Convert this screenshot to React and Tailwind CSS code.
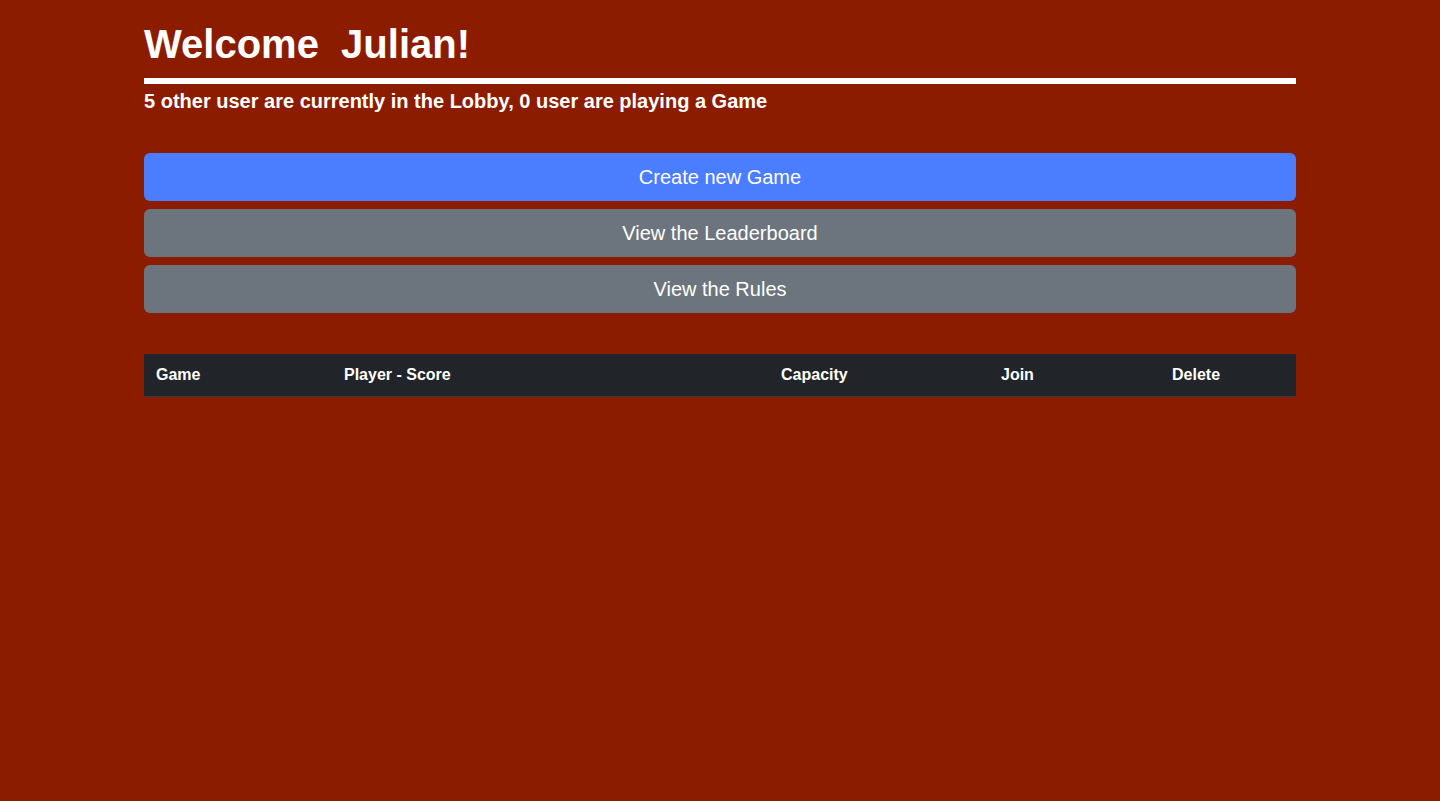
export default function App() {
  const buttons = [
    { label: "Create new Game", cls: "bg-[#4a7dff]" },
    { label: "View the Leaderboard", cls: "bg-[#6c757d]" },
    { label: "View the Rules", cls: "bg-[#6c757d]" },
  ];

  return (
    <div className="min-h-[801px] bg-[#8c1c00] font-['Liberation_Sans',Arial,sans-serif] text-white">
      <div className="w-[1152px] mx-auto pt-[20px]">
        {/* Header */}
        <h1 className="text-[40px] leading-[48px] font-bold whitespace-pre">Welcome  Julian!</h1>
        <div className="h-[6px] bg-white mt-[10px]"></div>
        <p className="text-[20px] leading-[24px] font-bold mt-[5px]">
          5 other user are currently in the Lobby, 0 user are playing a Game
        </p>

        {/* Actions */}
        <div className="flex flex-col gap-2 mt-[40px]">
          {buttons.map((b) => (
            <button
              key={b.label}
              className={`${b.cls} h-[48px] rounded-[6px] text-[20px] text-white w-full`}
            >
              {b.label}
            </button>
          ))}
        </div>

        {/* Games table */}
        <table className="w-full mt-[41px] border-collapse">
          <thead>
            <tr className="bg-[#212529] border-b border-[#373b3e] text-[16px] font-bold text-left">
              <th className="w-[188px] px-3 h-[42px]">Game</th>
              <th className="w-[437px] px-3">Player - Score</th>
              <th className="w-[220px] px-3">Capacity</th>
              <th className="w-[171px] px-3">Join</th>
              <th className="px-3">Delete</th>
            </tr>
          </thead>
          <tbody></tbody>
        </table>
      </div>
    </div>
  );
}
